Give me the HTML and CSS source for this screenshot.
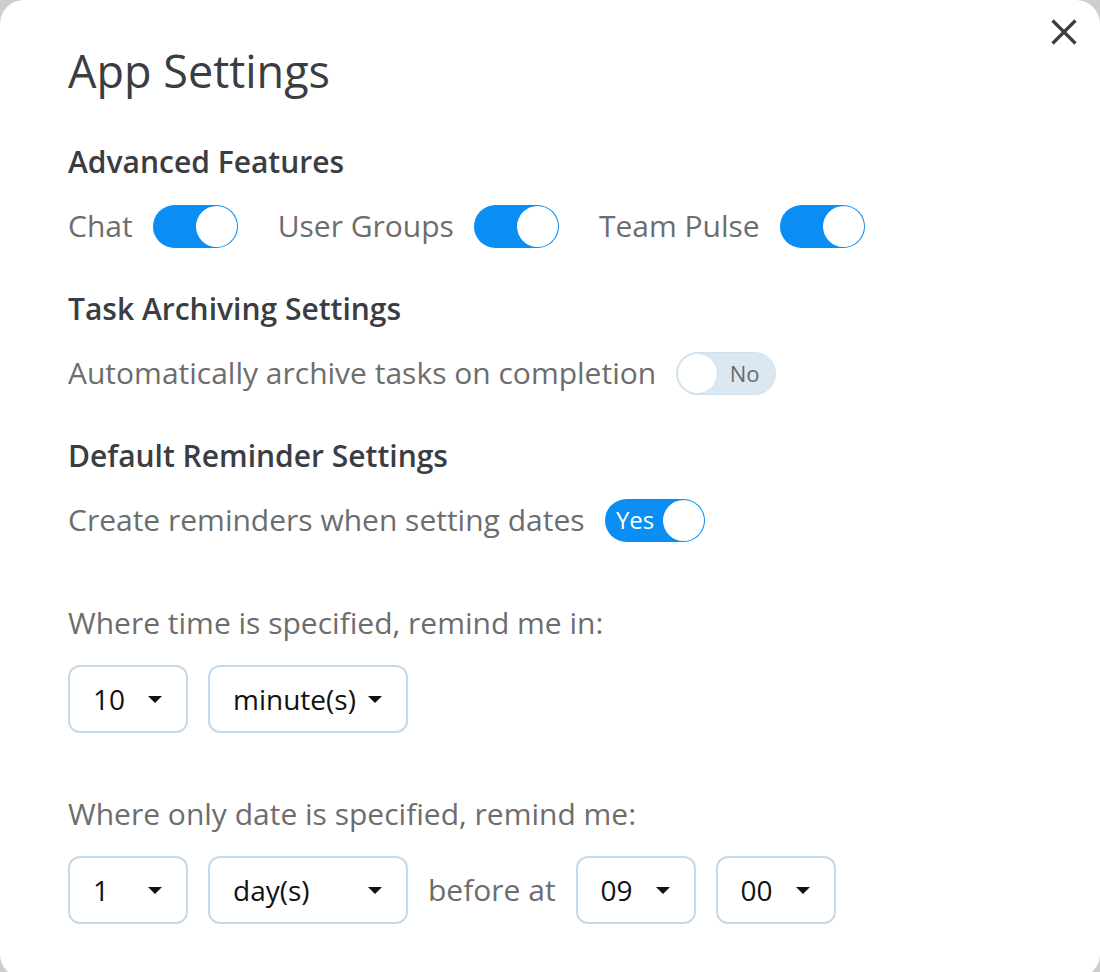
FILE: index.html
```html
<!DOCTYPE html>
<html lang="en">
<head>
<meta charset="utf-8">
<title>App Settings</title>
<link rel="stylesheet" href="styles.css">
</head>
<body>
<div class="modal">
  <button class="close" aria-label="Close">
    <svg width="26" height="26" viewBox="0 0 26 26"><path d="M1.5 1.5 L24.5 24.5 M24.5 1.5 L1.5 24.5" stroke="#3a3d42" stroke-width="3.2" stroke-linecap="butt" fill="none"/></svg>
  </button>
  <h1 class="title">App Settings</h1>

  <h2 class="heading h-first">Advanced Features</h2>
  <div class="row features">
    <span class="label">Chat</span>
    <span class="toggle on"><span class="knob"></span></span>
    <span class="label">User Groups</span>
    <span class="toggle on"><span class="knob"></span></span>
    <span class="label">Team Pulse</span>
    <span class="toggle on"><span class="knob"></span></span>
  </div>

  <h2 class="heading">Task Archiving Settings</h2>
  <div class="row">
    <span class="label">Automatically archive tasks on completion</span>
    <span class="toggle wide off"><span class="knob"></span><span class="ttext">No</span></span>
  </div>

  <h2 class="heading">Default Reminder Settings</h2>
  <div class="row">
    <span class="label">Create reminders when setting dates</span>
    <span class="toggle wide on"><span class="ttext">Yes</span><span class="knob"></span></span>
  </div>

  <p class="label question">Where time is specified, remind me in:</p>
  <div class="row selects">
    <div class="select small"><span>10</span><span class="caret"></span></div>
    <div class="select large"><span>minute(s)</span><span class="caret"></span></div>
  </div>

  <p class="label question">Where only date is specified, remind me:</p>
  <div class="row selects">
    <div class="select small"><span>1</span><span class="caret"></span></div>
    <div class="select large"><span>day(s)</span><span class="caret"></span></div>
    <span class="label">before at</span>
    <div class="select small"><span>09</span><span class="caret"></span></div>
    <div class="select small"><span>00</span><span class="caret"></span></div>
  </div>
</div>
</body>
</html>
```

FILE: styles.css
```css
* { box-sizing: border-box; }
html, body { margin: 0; padding: 0; }
body {
  background: #cdcdcd;
  font-family: "Open Sans", "Noto Sans", sans-serif;
  overflow: hidden;
  height: 972px;
}
.modal {
  position: relative;
  background: #ffffff;
  width: 1100px;
  height: 978px;
  border-radius: 24px;
  padding: 45px 68px 0 68px;
  display: flex;
  flex-direction: column;
  align-items: flex-start;
}
.close {
  position: absolute;
  top: 19px;
  left: 1051px;
  width: 26px;
  height: 26px;
  padding: 0;
  border: none;
  background: none;
  display: block;
}
.close svg { display: block; }
.title {
  margin: 0;
  font-size: 45px;
  line-height: 52px;
  font-weight: 400;
  color: #3a3d42;
}
.heading {
  margin: 43px 0 0 0;
  font-size: 30px;
  line-height: 36px;
  font-weight: 600;
  color: #3a3d42;
}
.heading.h-first { margin-top: 47px; }
.row {
  display: flex;
  align-items: center;
  margin-top: 24px;
  height: 44px;
}
.label {
  font-size: 30px;
  line-height: 40px;
  color: #6d6d6d;
  white-space: nowrap;
}
.row .label + .toggle { margin-left: 20px; }
.features .toggle + .label { margin-left: 40px; }
.toggle {
  display: flex;
  align-items: center;
  width: 85px;
  height: 43px;
  border-radius: 22px;
  padding: 1px;
}
.toggle.on {
  background: #0a8ef3;
  justify-content: flex-end;
}
.toggle.wide { width: 100px; }
.toggle.off {
  background: #dce8f1;
  border: 1px solid #cfe0ec;
  padding: 0;
}
.knob {
  width: 41px;
  height: 41px;
  border-radius: 50%;
  background: #ffffff;
  flex: none;
}
.toggle.off .knob {
  border: 1px solid #cfe0ec;
}
.ttext {
  flex: 1;
  text-align: center;
  font-size: 22px;
  line-height: 30px;
}
.toggle.on .ttext { color: #ffffff; font-size: 24px; padding-left: 2px; }
.toggle.off .ttext { color: #666a6e; padding-right: 4px; }
.question {
  margin: 61px 0 0 0;
}
.row.selects {
  margin-top: 22px;
  height: 68px;
  gap: 20px;
}
.select {
  height: 68px;
  border: 2px solid #c6d9ea;
  border-radius: 12px;
  display: flex;
  align-items: center;
  justify-content: space-between;
  padding: 0 24px 0 23px;
  font-size: 28px;
  color: #111111;
}
.select.small { width: 120px; }
.select.large { width: 200px; }
.caret {
  width: 0;
  height: 0;
  border-left: 7px solid transparent;
  border-right: 7px solid transparent;
  border-top: 7px solid #111111;
}
```
